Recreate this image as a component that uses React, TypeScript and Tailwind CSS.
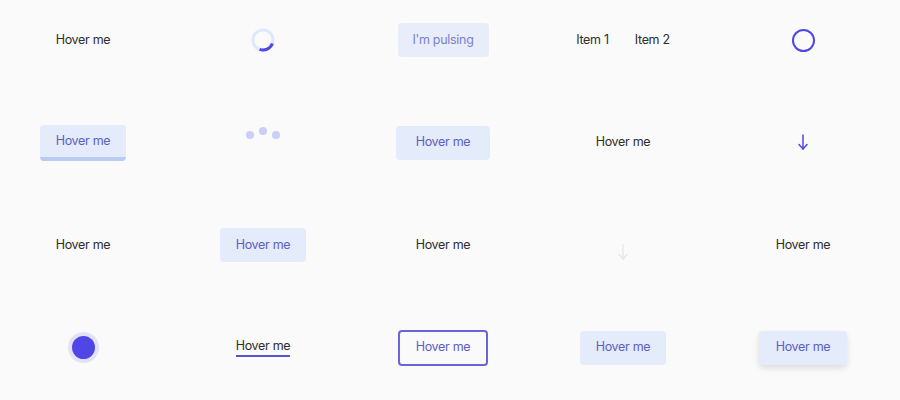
import React from "react";

const font = { fontFamily: "Inter, 'Noto Sans', sans-serif" };

function Cell({ children }: { children: React.ReactNode }) {
  return <div className="flex h-[80px] items-center justify-center">{children}</div>;
}

function Plain({ children, className = "" }: { children: React.ReactNode; className?: string }) {
  return (
    <span className={"text-[12.5px] leading-none tracking-[-0.3px] text-[#2e2e2e] " + className}>{children}</span>
  );
}

function Btn({ children, className = "" }: { children: React.ReactNode; className?: string }) {
  return (
    <div
      className={
        "flex h-[34px] items-center justify-center rounded-[4px] bg-[#e4ebfb] text-[12.5px] leading-none tracking-[-0.3px] text-[#5d60c2] " +
        className
      }
    >
      {children}
    </div>
  );
}

function Arrow({ color, className = "" }: { color: string; className?: string }) {
  return (
    <svg width="12" height="17" viewBox="0 0 12 17" fill="none" className={className}>
      <path d="M6 1v14" stroke={color} strokeWidth="1.5" strokeLinecap="round" />
      <path d="M2 10.5l4 4.5 4-4.5" stroke={color} strokeWidth="1.5" strokeLinecap="round" strokeLinejoin="round" />
    </svg>
  );
}

export default function App() {
  return (
    <div className="h-[400px] w-[900px] overflow-hidden bg-[#fafafa]" style={font}>
      <div className="grid grid-cols-[repeat(5,160px)] gap-x-[20px] gap-y-[22.5px] pl-[3px]">
        {/* Row 1 */}
        <Cell>
          <Plain>Hover me</Plain>
        </Cell>
        <Cell>
          <svg width="26" height="26" viewBox="0 0 26 26">
            <circle cx="13" cy="13" r="10" fill="none" stroke="#e1e8fb" strokeWidth="3" />
            <path
              d="M22.4 16.4 A10 10 0 0 1 9.6 22.4"
              fill="none"
              stroke="#4f46e5"
              strokeWidth="3"
            />
          </svg>
        </Cell>
        <Cell>
          <Btn className="w-[91px] opacity-80">I'm pulsing</Btn>
        </Cell>
        <Cell>
          <div className="flex items-center gap-[26px]">
            <Plain>Item 1</Plain>
            <Plain>Item 2</Plain>
          </div>
        </Cell>
        <Cell>
          <div className="h-[23px] w-[23px] rounded-full border-2 border-[#4f46e5]" />
        </Cell>

        {/* Row 2 */}
        <Cell>
          <div className="flex h-[36px] w-[86px] items-center justify-center rounded-[4px] border-b-4 border-[#b9cdf3] bg-[#e4ebfb] pt-[2px] text-[12.5px] leading-none tracking-[-0.3px] text-[#5d60c2]">
            Hover me
          </div>
        </Cell>
        <Cell>
          <div className="-mt-[19px] flex items-start gap-[5px]">
            <div className="mt-[4px] h-[8px] w-[8px] rounded-full bg-[#cdcef7]" />
            <div className="h-[8px] w-[8px] rounded-full bg-[#cdcef7]" />
            <div className="mt-[4px] h-[8px] w-[8px] rounded-full bg-[#cdcef7]" />
          </div>
        </Cell>
        <Cell>
          <Btn className="w-[94px]">Hover me</Btn>
        </Cell>
        <Cell>
          <Plain>Hover me</Plain>
        </Cell>
        <Cell>
          <Arrow color="#4f46e5" />
        </Cell>

        {/* Row 3 */}
        <Cell>
          <Plain>Hover me</Plain>
        </Cell>
        <Cell>
          <Btn className="w-[86px]">Hover me</Btn>
        </Cell>
        <Cell>
          <Plain>Hover me</Plain>
        </Cell>
        <Cell>
          <Arrow color="#e8e8e8" className="mt-[14px]" />
        </Cell>
        <Cell>
          <Plain>Hover me</Plain>
        </Cell>

        {/* Row 4 */}
        <Cell>
          <div className="h-[23px] w-[23px] rounded-full bg-[#4f46e5] shadow-[0_0_0_4px_#e2e2f7]" />
        </Cell>
        <Cell>
          <Plain className="mt-[2px] border-b-2 border-[#5b52d6] pb-[3px]">Hover me</Plain>
        </Cell>
        <Cell>
          <div className="flex h-[36px] w-[90px] items-center justify-center rounded-[4px] border-2 border-[#6b63d8] text-[12.5px] leading-none tracking-[-0.3px] text-[#5d60c2]">
            Hover me
          </div>
        </Cell>
        <Cell>
          <Btn className="w-[86px]">Hover me</Btn>
        </Cell>
        <Cell>
          <Btn className="w-[88px] shadow-[0_3px_6px_rgba(0,0,0,0.12)]">Hover me</Btn>
        </Cell>
      </div>
    </div>
  );
}
